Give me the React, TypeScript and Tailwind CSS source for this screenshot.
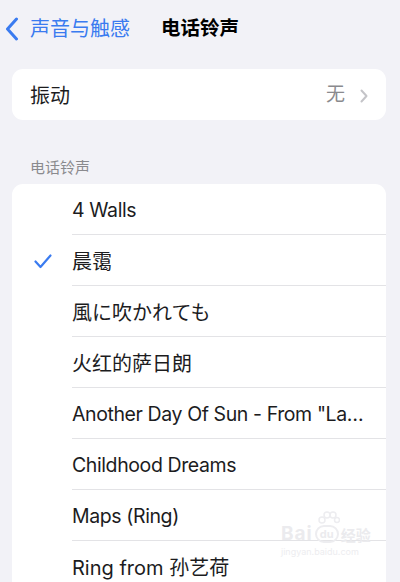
import React from "react";

const songs = [
  "4 Walls",
  "晨霭",
  "風に吹かれても",
  "火红的萨日朗",
  'Another Day Of Sun - From "La La Land" Soundtrack',
  "Childhood Dreams",
  "Maps (Ring)",
  "Ring from 孙艺荷",
  "Sunrise",
];

const selected = "晨霭";

function BackChevron() {
  return (
    <svg width="14" height="24" viewBox="0 0 14 24" fill="none">
      <path d="M11.5 2 L2.5 12 L11.5 22" stroke="#3a7bf0" strokeWidth="3" strokeLinecap="round" strokeLinejoin="round" />
    </svg>
  );
}

function Check() {
  return (
    <svg width="18" height="15" viewBox="0 0 18 15" fill="none">
      <path d="M1.5 7.5 L6.5 13 L16.5 1.5" stroke="#3a7bf0" strokeWidth="2.2" strokeLinecap="round" strokeLinejoin="round" />
    </svg>
  );
}

function Watermark() {
  return (
    <div className="pointer-events-none absolute left-[281px] top-[524px] flex select-none flex-col items-start">
      <div className="flex items-end font-bold leading-none text-[#ebebee]">
        <span className="text-[19px] tracking-[1px]">Bai</span>
        <span className="relative mx-[2px] flex h-[18px] w-[24px] items-center justify-center rounded-full border-[2px] border-[#ededf0] text-[11px]">
          du
          <svg className="absolute -top-[16px] left-[1px]" width="22" height="16" viewBox="0 0 22 16" fill="none">
            <circle cx="4" cy="9" r="3" stroke="#ededf0" strokeWidth="1.5" />
            <circle cx="9" cy="4" r="3" stroke="#ededf0" strokeWidth="1.5" />
            <circle cx="15" cy="4" r="3" stroke="#ededf0" strokeWidth="1.5" />
            <circle cx="19" cy="9" r="2.5" stroke="#ededf0" strokeWidth="1.5" />
          </svg>
        </span>
        <span className="text-[15px]">经验</span>
      </div>
      <span className="mt-[4px] text-[9px] leading-none text-[#ededf0]">jingyan.baidu.com</span>
    </div>
  );
}

export default function App() {
  return (
    <div className="relative h-[582px] w-[400px] overflow-hidden bg-[#f2f2f7] font-['Inter','Noto_Sans_CJK_SC',sans-serif] text-[#1c1c1e]">
      {/* Nav bar */}
      <div className="flex h-[56px] items-center pl-[5px] pt-[2px]">
        <BackChevron />
        <span className="ml-[11px] text-[20px] text-[#3a7bf0]">声音与触感</span>
        <span className="ml-[31px] text-[19.5px] font-semibold text-black">电话铃声</span>
      </div>

      <div className="ml-[12px] mr-[14px]">
        {/* Vibration */}
        <div className="mt-[13px] flex h-[51px] items-center justify-between rounded-[11px] bg-white pl-[18px] pr-[18px] pt-[2px]">
          <span className="text-[20px]">振动</span>
          <div className="flex items-center gap-[15px]">
            <span className="text-[19px] text-[#8a8a8e]">无</span>
            <svg width="8" height="14" viewBox="0 0 8 14" fill="none">
              <path d="M1.5 1.5 L6.5 7 L1.5 12.5" stroke="#c4c4c8" strokeWidth="2" strokeLinecap="round" strokeLinejoin="round" />
            </svg>
          </div>
        </div>

        {/* Ringtones */}
        <div className="mt-[38px] pl-[18px] text-[15px] leading-[20px] text-[#8a8a8e]">电话铃声</div>
        <div className="mt-[6px] rounded-t-[11px] bg-white">
          {songs.map((song) => {
            const latin = /^[\x00-\x7f]*$/.test(song);
            return (
              <div key={song} className="flex h-[51px] items-stretch">
                <div className="flex w-[60px] shrink-0 items-center pl-[22px] pt-[2px]">
                  {song === selected && <Check />}
                </div>
                <div className="flex min-w-0 flex-1 items-center border-b border-[#e3e3e6] pr-[21px] pt-[3px]">
                  <span className={latin ? "truncate text-[19.5px] tracking-[-0.4px]" : "truncate text-[20px]"}>{song}</span>
                </div>
              </div>
            );
          })}
        </div>
      </div>

      <Watermark />
    </div>
  );
}
